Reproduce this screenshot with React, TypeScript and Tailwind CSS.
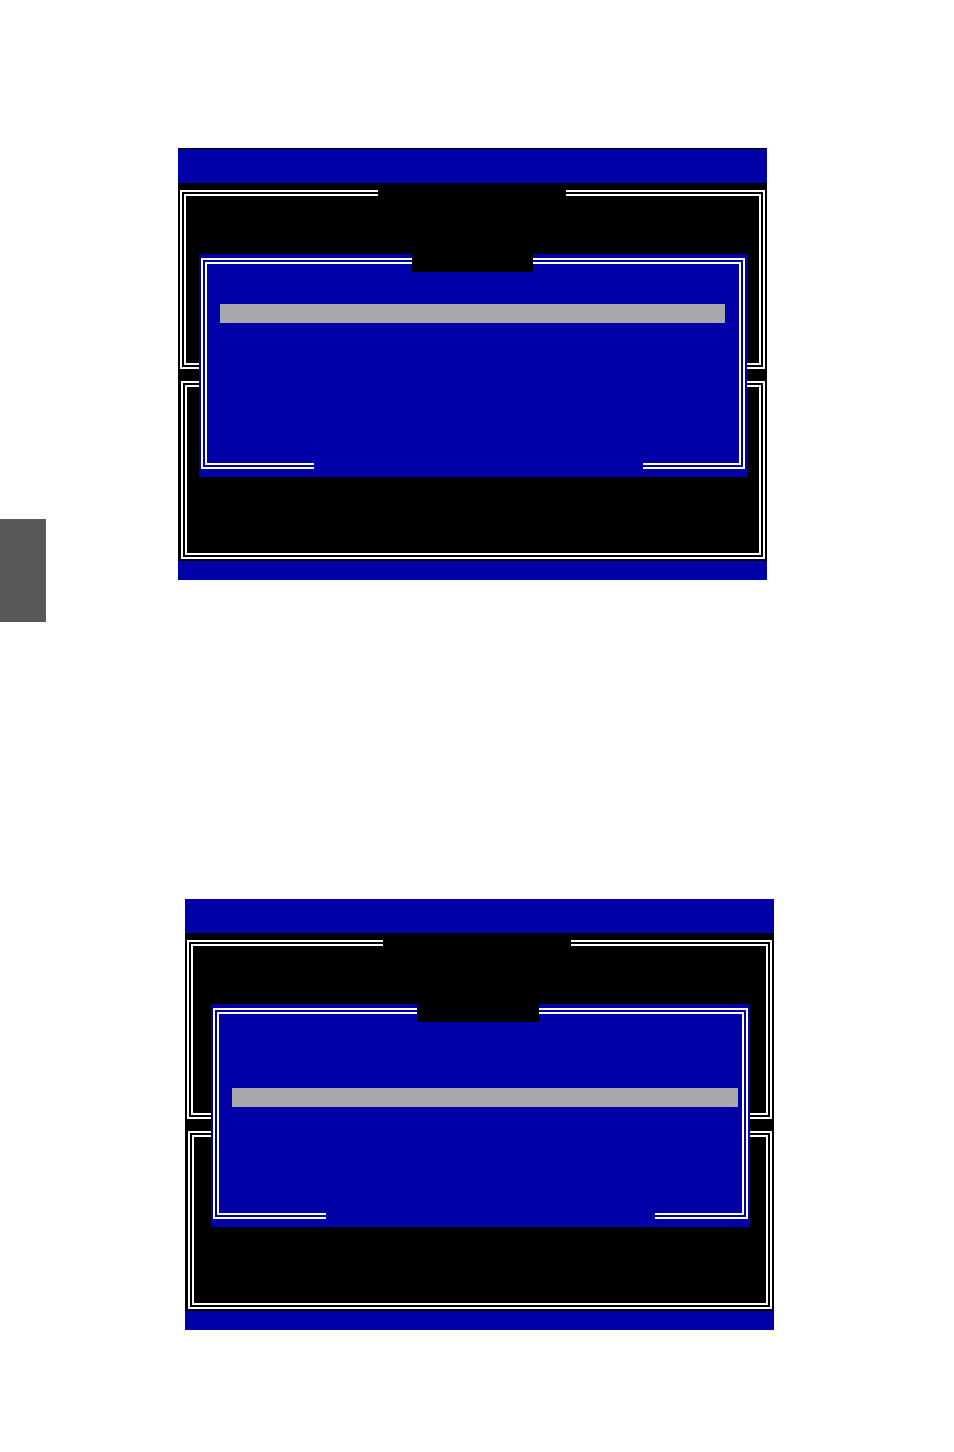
import React from "react";

type ScreenProps = {
  topRule?: boolean;
  frameTitleLeft: number;
  dialogLeft: number;
  dialogWidth: number;
  titleLeft: number;
  titleWidth: number;
  barTop: number;
  barWidth: number;
};

// Two nested white rules with a thin gap between them, BIOS style.
function DoubleFrame({ className = "", children }: { className?: string; children?: React.ReactNode }) {
  return (
    <div className={`relative border-2 border-white p-[2px] ${className}`}>
      <div className="h-full w-full border-2 border-white">{children}</div>
    </div>
  );
}

function SetupScreen({
  topRule,
  frameTitleLeft,
  dialogLeft,
  dialogWidth,
  titleLeft,
  titleWidth,
  barTop,
  barWidth,
}: ScreenProps) {
  return (
    <div className={`flex w-[589px] flex-col ${topRule ? "border-t border-black" : ""}`}>
      <div className="h-[34px] bg-[#0000a8]" />
      <div className="relative flex h-[378px] flex-col gap-[12px] bg-black px-[2px] pb-[2px] pt-[7px]">
        <DoubleFrame className="h-[179px]">
          <span
            className="absolute top-[-4px] h-[12px] w-[188px] bg-black"
            style={{ left: frameTitleLeft - 2 }}
          />
        </DoubleFrame>
        <DoubleFrame className="ml-px flex-1" />

        {/* pop-up dialog */}
        <div
          className="absolute top-[71px] h-[223px] bg-[#0000a8] px-[2px] pb-[8px] pt-[4px]"
          style={{ left: dialogLeft, width: dialogWidth }}
        >
          <DoubleFrame className="h-full">
            <div className="pl-[13px]" style={{ paddingTop: barTop }}>
              <div className="h-[19px] bg-[#a7a8ab]" style={{ width: barWidth }} />
            </div>
          </DoubleFrame>
          <span
            className="absolute top-0 h-[18px] bg-black"
            style={{ left: titleLeft, width: titleWidth }}
          />
          <span className="absolute bottom-[7px] left-[115px] h-[9px] w-[329px] bg-[#0000a8]" />
        </div>
      </div>
      <div className="h-[19px] bg-[#0000a8]" />
    </div>
  );
}

export default function App() {
  return (
    <div className="relative h-[1452px] w-[954px] bg-white">
      {/* chapter thumb tab on the page edge */}
      <div className="absolute left-0 top-[519px] h-[103px] w-[46px] bg-[#58595b]" />

      <div className="flex flex-col pt-[148px]">
        <div className="ml-[178px]">
          <SetupScreen
            topRule
            frameTitleLeft={198}
            dialogLeft={21}
            dialogWidth={548}
            titleLeft={213}
            titleWidth={121}
            barTop={40}
            barWidth={505}
          />
        </div>
        <div className="ml-[185px] mt-[319px]">
          <SetupScreen
            frameTitleLeft={196}
            dialogLeft={26}
            dialogWidth={539}
            titleLeft={206}
            titleWidth={122}
            barTop={74}
            barWidth={506}
          />
        </div>
      </div>
    </div>
  );
}
